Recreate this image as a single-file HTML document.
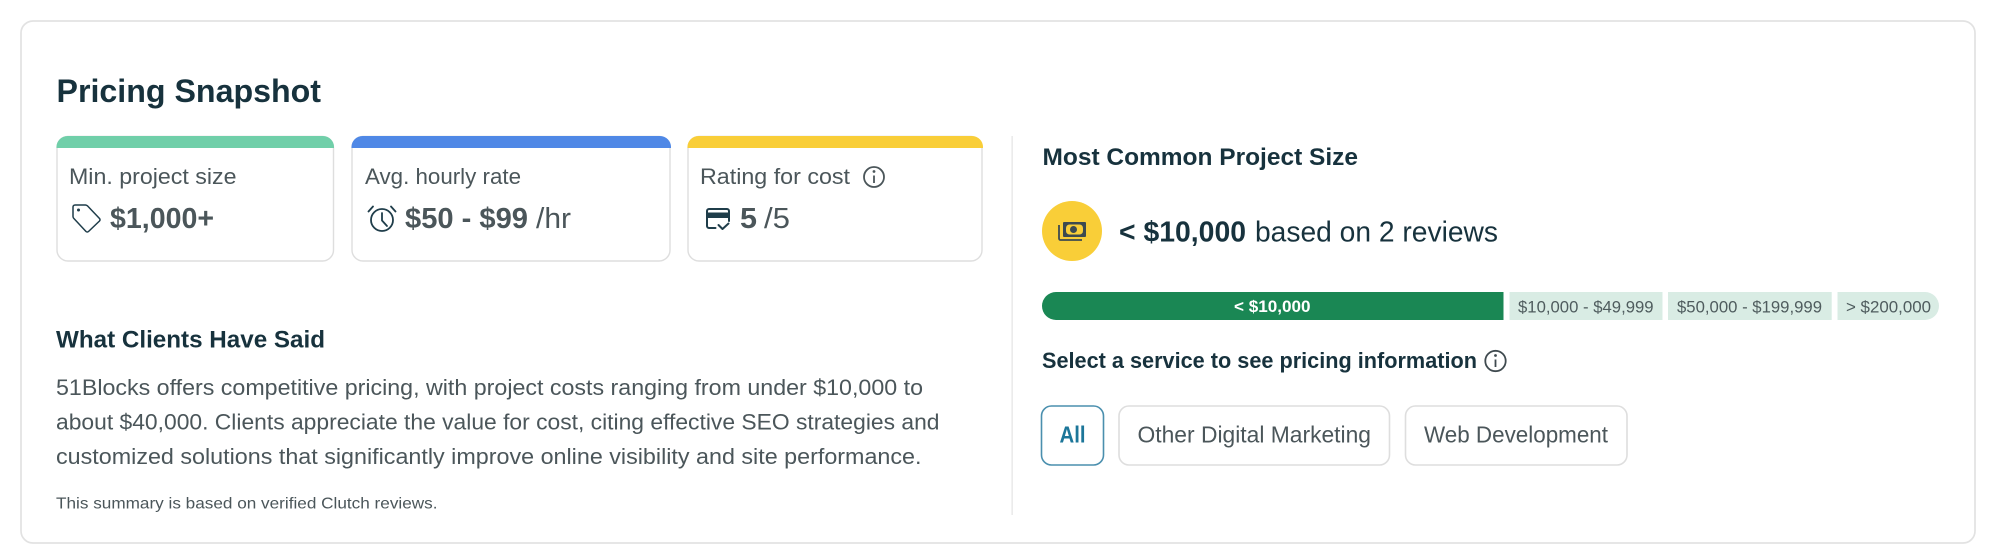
<!DOCTYPE html>
<html>
<head>
<meta charset="utf-8">
<title>Pricing Snapshot</title>
<style>
html,body{margin:0;padding:0;background:#fff;width:1999px;height:560px;overflow:hidden}
svg{display:block;filter:blur(.35px)}
text{font-family:"Liberation Sans",sans-serif;white-space:pre}
.b{font-weight:700}
.h{fill:#17323d}
.g{fill:#4b565a}
.s{fill:#4f5c5e;font-size:17px}
</style>
</head>
<body>
<svg width="1999" height="560" viewBox="0 0 1999 560" xmlns="http://www.w3.org/2000/svg">
<rect x="21" y="21" width="1954" height="522" rx="12" fill="#fff" stroke="#e2e2e2" stroke-width="1.700"/>

<text class="b h" x="56.500" y="102" font-size="32" textLength="264.500" lengthAdjust="spacingAndGlyphs">Pricing Snapshot</text>

<!-- cards -->
<rect x="57" y="136.500" width="276.500" height="124.500" rx="11" fill="#fff" stroke="#dedede" stroke-width="1.400"/>
<path d="M56.500 148V147a11 11 0 0 1 11-11H323a11 11 0 0 1 11 11V148Z" fill="#70cfa9"/>
<rect x="352" y="136.500" width="318" height="124.500" rx="11" fill="#fff" stroke="#dedede" stroke-width="1.400"/>
<path d="M351.500 148V147a11 11 0 0 1 11-11H660a11 11 0 0 1 11 11V148Z" fill="#4f88e6"/>
<rect x="688" y="136.500" width="294" height="124.500" rx="11" fill="#fff" stroke="#dedede" stroke-width="1.400"/>
<path d="M687.500 148V147a11 11 0 0 1 11-11H972a11 11 0 0 1 11 11V148Z" fill="#f9ce38"/>

<text class="g" x="69" y="184" font-size="22" textLength="167.500" lengthAdjust="spacingAndGlyphs">Min. project size</text>
<path d="M73 207a2 2 0 0 1 2-2H85.500a3 3 0 0 1 2 .9L99.500 218.500a1.800 1.800 0 0 1 0 2.500L88.500 231.500a1.800 1.800 0 0 1-2.500 0L73.900 218.500a3 3 0 0 1-.9-2Z" fill="none" stroke="#1f3d4a" stroke-width="1.500"/>
<circle cx="78.500" cy="210" r="1.500" fill="#1f3d4a"/>
<text class="b g" x="110" y="228" font-size="29" textLength="104" lengthAdjust="spacingAndGlyphs">$1,000+</text>

<text class="g" x="365" y="184" font-size="22" textLength="156" lengthAdjust="spacingAndGlyphs">Avg. hourly rate</text>
<g fill="none" stroke="#1f3d4a" stroke-width="1.800" stroke-linecap="round" stroke-linejoin="round">
<circle cx="382" cy="220" r="11"/>
<path d="M382 213V220.500L387 226"/>
<path d="M368.500 211.500L373 206.500M395.500 211.500L391 206.500"/>
</g>
<text class="b g" x="405" y="228" font-size="29" textLength="123" lengthAdjust="spacingAndGlyphs">$50 - $99</text>
<text class="g" x="536" y="228" font-size="29" textLength="35" lengthAdjust="spacingAndGlyphs">/hr</text>

<text class="g" x="700" y="184" font-size="22" textLength="150" lengthAdjust="spacingAndGlyphs">Rating for cost</text>
<g fill="none" stroke="#4b565a" stroke-width="1.800"><circle cx="874" cy="177" r="10"/><path d="M874 175.500V183"/></g>
<circle cx="874" cy="171.500" r="1.400" fill="#4b565a"/>
<g fill="none" stroke="#1f3d4a" stroke-width="2" stroke-linecap="round" stroke-linejoin="round">
<path d="M715.500 228H709a2 2 0 0 1-2-2V211a2 2 0 0 1 2-2H727a2 2 0 0 1 2 2V221"/>
<path d="M718.500 225L722.500 229L728.500 223.500"/>
</g>
<rect x="707" y="212.500" width="22" height="5.500" fill="#1f3d4a"/>
<text class="b g" x="740" y="228" font-size="29" textLength="17" lengthAdjust="spacingAndGlyphs">5</text>
<text class="g" x="764" y="228" font-size="29" textLength="26" lengthAdjust="spacingAndGlyphs">/5</text>

<!-- left lower -->
<text class="b h" x="56" y="347.500" font-size="24" textLength="269" lengthAdjust="spacingAndGlyphs">What Clients Have Said</text>
<text class="g" x="56" y="395" font-size="22" textLength="867" lengthAdjust="spacingAndGlyphs">51Blocks offers competitive pricing, with project costs ranging from under $10,000 to</text>
<text class="g" x="56" y="429.500" font-size="22" textLength="883.500" lengthAdjust="spacingAndGlyphs">about $40,000. Clients appreciate the value for cost, citing effective SEO strategies and</text>
<text class="g" x="56" y="464" font-size="22" textLength="865.500" lengthAdjust="spacingAndGlyphs">customized solutions that significantly improve online visibility and site performance.</text>
<text class="g" x="56" y="508.300" font-size="16" textLength="381.500" lengthAdjust="spacingAndGlyphs">This summary is based on verified Clutch reviews.</text>

<!-- divider -->
<rect x="1011.500" y="136" width="1.300" height="379" fill="#e6e6e6"/>

<!-- right -->
<text class="b h" x="1042.500" y="165" font-size="24" textLength="315.500" lengthAdjust="spacingAndGlyphs">Most Common Project Size</text>

<circle cx="1072" cy="231" r="30" fill="#f9ce38"/>
<rect x="1063" y="222" width="23" height="15" rx="1" fill="#3d4a50"/>
<rect x="1066" y="224.500" width="17" height="10" rx="3.500" fill="#f9ce38"/>
<circle cx="1073.500" cy="229.500" r="3.500" fill="#3d4a50"/>
<path d="M1059 225V238.500a1.500 1.500 0 0 0 1.500 1.500H1082" fill="none" stroke="#3d4a50" stroke-width="1.800"/>

<text class="b h" x="1119" y="241.500" font-size="29" textLength="127" lengthAdjust="spacingAndGlyphs">&lt; $10,000</text>
<text class="h" x="1255" y="241.500" font-size="29" textLength="243" lengthAdjust="spacingAndGlyphs">based on 2 reviews</text>

<path d="M1056 292H1503.500V320H1056a14 14 0 0 1 0-28Z" fill="#1a8754"/>
<rect x="1509.500" y="292" width="153" height="28" fill="#d9ece4"/>
<rect x="1668" y="292" width="163.700" height="28" fill="#d9ece4"/>
<path d="M1837.500 292H1925a14 14 0 0 1 0 28H1837.500Z" fill="#d9ece4"/>
<text class="b" fill="#fff" x="1234" y="312" font-size="17" textLength="76.500" lengthAdjust="spacingAndGlyphs">&lt; $10,000</text>
<text class="s" x="1518" y="312.300" textLength="135.600" lengthAdjust="spacingAndGlyphs">$10,000 - $49,999</text>
<text class="s" x="1677" y="312.300" textLength="145" lengthAdjust="spacingAndGlyphs">$50,000 - $199,999</text>
<text class="s" x="1846" y="312.300" textLength="85" lengthAdjust="spacingAndGlyphs">&gt; $200,000</text>

<text class="b h" x="1042" y="368" font-size="22" textLength="435" lengthAdjust="spacingAndGlyphs">Select a service to see pricing information</text>
<g fill="none" stroke="#3f4a4f" stroke-width="1.800"><circle cx="1495.500" cy="361" r="10.200"/><path d="M1495.500 359.500V367"/></g>
<circle cx="1495.500" cy="355.500" r="1.400" fill="#3f4a4f"/>

<rect x="1041.500" y="406" width="62" height="59" rx="10" fill="#fff" stroke="#4a8fae" stroke-width="1.600"/>
<rect x="1119" y="406" width="270.500" height="59" rx="10" fill="#fff" stroke="#dedede" stroke-width="1.600"/>
<rect x="1405.500" y="406" width="221.500" height="59" rx="10" fill="#fff" stroke="#dedede" stroke-width="1.600"/>
<text class="b" fill="#1c7699" x="1059.500" y="442.300" font-size="23" textLength="26" lengthAdjust="spacingAndGlyphs">All</text>
<text class="g" x="1137.500" y="442.300" font-size="23" textLength="233.500" lengthAdjust="spacingAndGlyphs">Other Digital Marketing</text>
<text class="g" x="1424" y="442.300" font-size="23" textLength="184" lengthAdjust="spacingAndGlyphs">Web Development</text>
</svg>
</body>
</html>
